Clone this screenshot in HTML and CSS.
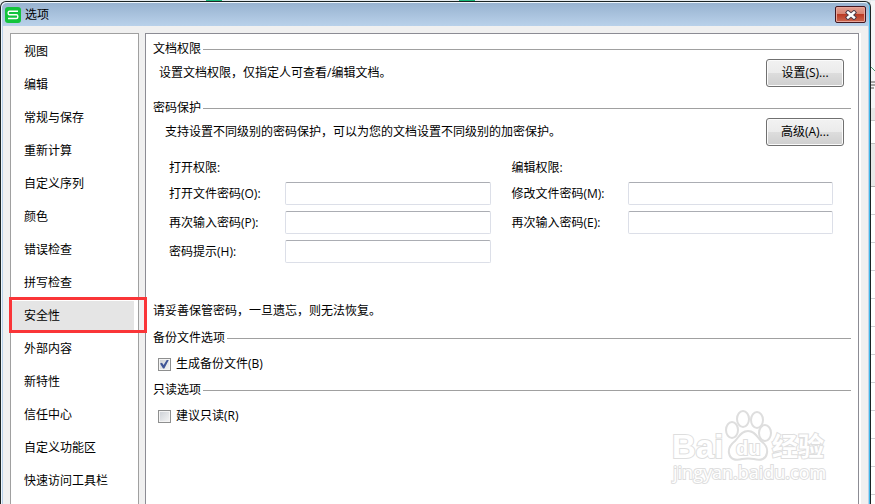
FILE: index.html
```
<!DOCTYPE html>
<html lang="zh-CN">
<head>
  <meta charset="UTF-8" />
  <meta name="viewport" content="width=device-width, initial-scale=1" />
  <title>选项</title>
  <link rel="stylesheet" href="styles.css">
</head>
<body>

  <!-- Spreadsheet window behind the dialog -->
  <div class="backdrop-tabs"><span></span><span></span></div>

  <div class="desktop">
    <!-- Options dialog -->
    <div class="dialog" role="dialog" aria-labelledby="dialog-title">
      <header class="titlebar">
        <svg class="logo" width="16" height="16" viewBox="0 0 16 16" aria-hidden="true">
          <rect width="16" height="16" rx="3" fill="#12c43c"/>
          <path d="M13 4.2H4.6Q3.2 4.2 3.2 5.6V6.4Q3.2 7.8 4.6 7.8H11.4Q12.8 7.8 12.8 9.2V10Q12.8 11.5 11.4 11.5H3" fill="none" stroke="#fff" stroke-width="1.4"/>
        </svg>
        <h1 id="dialog-title">选项</h1>
        <button class="close" type="button" aria-label="关闭">
          <svg width="12" height="10" viewBox="0 0 12 10">
            <path d="M3 2.5L9 7.5M9 2.5L3 7.5" stroke="#4d3b48" stroke-width="4.4" stroke-linecap="square"/>
            <path d="M3 2.5L9 7.5M9 2.5L3 7.5" stroke="#fff" stroke-width="2.4" stroke-linecap="square"/>
          </svg>
        </button>
      </header>

      <div class="content">
        <!-- Sidebar -->
        <nav class="sidebar">
          <ul>
            <li><a href="#view">视图</a></li>
            <li><a href="#edit">编辑</a></li>
            <li><a href="#general">常规与保存</a></li>
            <li><a href="#recalc">重新计算</a></li>
            <li><a href="#lists">自定义序列</a></li>
            <li><a href="#color">颜色</a></li>
            <li><a href="#errors">错误检查</a></li>
            <li><a href="#spelling">拼写检查</a></li>
            <li class="selected"><a href="#security">安全性</a></li>
            <li><a href="#external">外部内容</a></li>
            <li><a href="#features">新特性</a></li>
            <li><a href="#trust">信任中心</a></li>
            <li><a href="#ribbon">自定义功能区</a></li>
            <li><a href="#toolbar">快速访问工具栏</a></li>
          </ul>
        </nav>

        <!-- Security page -->
        <main class="panel" id="security">
          <h2>文档权限</h2>
          <div class="action-row">
            <p>设置文档权限，仅指定人可查看/编辑文档。</p>
            <button class="btn" type="button">设置(S)...</button>
          </div>

          <h2 class="spaced">密码保护</h2>
          <div class="action-row indent">
            <p>支持设置不同级别的密码保护，可以为您的文档设置不同级别的加密保护。</p>
            <button class="btn" type="button">高级(A)...</button>
          </div>

          <form class="passwords">
            <div class="column">
              <p>打开权限:</p>
              <div class="field"><label for="open-pw">打开文件密码(O):</label><input type="password" id="open-pw"></div>
              <div class="field"><label for="open-pw2">再次输入密码(P):</label><input type="password" id="open-pw2"></div>
              <div class="field"><label for="hint">密码提示(H):</label><input type="text" id="hint"></div>
            </div>
            <div class="column">
              <p>编辑权限:</p>
              <div class="field"><label for="edit-pw">修改文件密码(M):</label><input type="password" id="edit-pw"></div>
              <div class="field"><label for="edit-pw2">再次输入密码(E):</label><input type="password" id="edit-pw2"></div>
            </div>
          </form>

          <p class="note">请妥善保管密码，一旦遗忘，则无法恢复。</p>

          <h2 class="spaced">备份文件选项</h2>
          <div class="check"><input type="checkbox" id="backup" checked><label for="backup">生成备份文件(B)</label></div>

          <h2>只读选项</h2>
          <div class="check"><input type="checkbox" id="readonly"><label for="readonly">建议只读(R)</label></div>

          <svg class="watermark" width="170" height="80" viewBox="0 0 170 80" aria-hidden="true">
            <g fill="#fff" stroke="#dedede" stroke-width="2">
              <text class="wm-brand" x="6" y="53">Bai</text>
              <ellipse cx="66" cy="25" rx="6" ry="8"/>
              <ellipse cx="77" cy="14" rx="6" ry="8"/>
              <ellipse cx="91" cy="15" rx="6" ry="8"/>
              <ellipse cx="99" cy="28" rx="6" ry="8"/>
              <path d="M82 26C75 26 73 32 69 36C64 40 62 43 63 48C64 54 69 56 76 54Q82 53 88 54C95 56 100 54 101 48C102 42 99 39 95 36C91 32 89 26 82 26Z"/>
              <text class="wm-du" x="70" y="50">du</text>
              <text class="wm-cjk" x="106" y="51">经验</text>
            </g>
            <text class="wm-url" x="7" y="74">jingyan.baidu.com</text>
          </svg>
        </main>
      </div>
    </div>

    <div class="backdrop-sheet">
      <div class="ribbon"><svg width="4" height="24" viewBox="0 0 4 24"><path d="M0 2L4 6" stroke="#4f9a72"/><path d="M0 17H4M0 20H4M0 23H3" stroke="#5b5550"/></svg></div>
      <div class="bar"></div>
      <div class="formula"></div>
      <div class="column-head"></div>
      <div class="cells"></div>
    </div>
  </div>

</body>
</html>
```

FILE: styles.css
```
* { box-sizing: border-box; margin: 0; padding: 0; }
body {
  height: 100vh;
  overflow: hidden;
  display: flex;
  flex-direction: column;
  background: #e6ebee;
  color: #000;
  font: 12px/16px "Open Sans", "Noto Sans CJK SC", sans-serif;
}
button, input { font: inherit; color: inherit; }
a { color: inherit; text-decoration: none; }

/* ===== Window behind ===== */
.backdrop-tabs { display: flex; gap: 237px; height: 1px; padding-left: 206px; flex-shrink: 0; }
.backdrop-tabs span { width: 16px; background: #17b978; }
.desktop { flex: 1; display: flex; min-height: 0; }
.backdrop-sheet { width: 4px; display: flex; flex-direction: column; background: #fff; }
.ribbon { height: 107px; padding-top: 64px; background: #f5f5f7; }
.bar { height: 13px; background: #e6e6e6; border-bottom: 1px solid #c8c8c8; }
.formula { height: 22px; }
.column-head { height: 44px; background: #e8e8e8; border-top: 1px solid #c0c0c0; border-bottom: 1px solid #b0b0b0; }
.cells { flex: 1; background: repeating-linear-gradient(#fff 0 27px, #d0d0d4 27px 28px); }

/* ===== Dialog ===== */
.dialog {
  flex: 1;
  min-width: 0;
  display: flex;
  flex-direction: column;
  background: #f0f0f0;
  border: 1px solid #1c2424;
  border-bottom: none;
  border-radius: 6px 6px 0 0;
  box-shadow: inset 1px 1px #eef6fc, inset 2px 0 #b9d1ea, inset -1px 0 #3fb8e8, inset -2px 0 #b9d1ea;
}
.titlebar {
  display: flex;
  align-items: center;
  height: 23px;
  margin: 1px 1px 0;
  padding: 0 3px;
  gap: 4px;
  background: linear-gradient(#98b3d0, #b9d1ea);
  border-radius: 5px 5px 0 0;
  flex-shrink: 0;
}
.titlebar h1 { flex: 1; font-size: 12px; font-weight: normal; }
.close {
  display: flex;
  align-items: center;
  justify-content: center;
  width: 31px;
  height: 17px;
  border: 1px solid #431720;
  border-radius: 2px;
  box-shadow: inset 0 0 0 1px #e8a79b;
  background: linear-gradient(#e3a092 0, #d88472 45%, #bb3a24 50%, #cc6850 100%);
}
.content { flex: 1; display: flex; gap: 6px; min-height: 0; padding: 7px 11px 0 9px; }

/* ===== Sidebar ===== */
.sidebar {
  width: 129px;
  flex-shrink: 0;
  padding: 3px 4px 0 1px;
  background: #fff;
  border: 1px solid #a0a0a0;
  border-bottom: none;
}
.sidebar ul { display: flex; flex-direction: column; gap: 4px; list-style: none; }
.sidebar li { position: relative; }
.sidebar a { display: block; padding: 0 12px; line-height: 29px; }
.sidebar .selected { background: #e5e5e5; }
.sidebar .selected::after {
  content: "";
  position: absolute;
  z-index: 1;
  inset: -4px -13px -3px -3px;
  border: 3px solid #fa3538;
}

/* ===== Page ===== */
.panel {
  position: relative;
  flex: 1;
  min-width: 0;
  padding: 7px 7px 0;
  background: #fff;
  border: 1px solid #8c8c94;
  border-bottom: none;
  box-shadow: 2px 0 #fff;
}
.panel h2 { display: flex; align-items: center; gap: 2px; font-size: 12px; font-weight: normal; }
.panel h2::after { content: ""; flex: 1; height: 1px; background: #a0a0a0; }
.panel .spaced { margin-top: 11px; }
.action-row { display: flex; align-items: center; justify-content: space-between; padding: 2px 7px 2px 6px; }
.action-row.indent { padding-left: 12px; }
.btn {
  width: 78px;
  height: 28px;
  border: 1px solid #707070;
  border-radius: 3px;
  box-shadow: inset 0 0 0 1px #fbfbfb;
  background: linear-gradient(#f2f2f2 0, #ebebeb 50%, #dddddd 50%, #cfcfcf 100%);
}

/* ===== Password form ===== */
.passwords { display: grid; grid-template-columns: 1fr 1fr; gap: 21px; margin: 12px 18px 0 16px; }
.column { display: flex; flex-direction: column; gap: 6px; }
.field { display: flex; align-items: center; }
.field label { width: 116px; flex-shrink: 0; }
.field input {
  flex: 1;
  min-width: 0;
  height: 23px;
  padding: 0 4px;
  background: #fff;
  border: 1px solid #dcdfe8;
  border-top-color: #abadb3;
  border-radius: 2px;
  outline: none;
}
.note { margin-top: 40px; }

/* ===== Check boxes ===== */
.check { display: flex; align-items: center; gap: 5px; margin: 10px 0 10px 5px; }
.check input {
  appearance: none;
  width: 13px;
  height: 13px;
  border: 1px solid #8e8f8f;
  box-shadow: inset 0 0 0 1px #f4f4f4;
  background: linear-gradient(135deg, #cbcfd5, #f6f6f6);
  display: grid;
  place-items: center;
}
.check input:checked::before {
  content: "";
  width: 9px;
  height: 9px;
  background: #3f5597;
  clip-path: polygon(0 45%, 22% 36%, 40% 62%, 78% 0, 100% 0, 48% 100%, 34% 100%);
}

/* ===== Watermark ===== */
.watermark { position: absolute; right: 22px; bottom: 19px; pointer-events: none; }
.watermark text { paint-order: stroke; }
.wm-brand { font: bold 33px "Liberation Sans", sans-serif; }
.wm-du { font: bold 20px "Liberation Sans", sans-serif; }
.wm-cjk { font: bold 26px "Noto Sans CJK SC", sans-serif; }
.wm-url { font: 18px "Open Sans", sans-serif; fill: #fff; stroke: #dedede; stroke-width: 2px; }
```
